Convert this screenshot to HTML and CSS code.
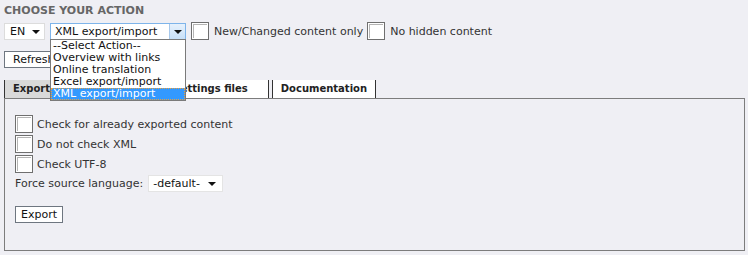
FILE: index.html
```html
<!DOCTYPE html>
<html>
<head>
<meta charset="utf-8">
<link rel="stylesheet" href="styles.css">
</head>
<body>
<div class="page">
  <h1 class="title">Choose your action</h1>
  <div class="actions">
    <div class="select lang">
      <span class="select-value">EN</span>
      <span class="arrow"></span>
    </div>
    <div class="select action focused">
      <span class="select-value">XML export/import</span>
      <span class="arrow-btn"><span class="arrow"></span></span>
      <ul class="options">
        <li>--Select Action--</li>
        <li>Overview with links</li>
        <li>Online translation</li>
        <li>Excel export/import</li>
        <li class="selected">XML export/import</li>
      </ul>
    </div>
    <span class="check"></span>
    <span class="label">New/Changed content only</span>
    <span class="check"></span>
    <span class="label">No hidden content</span>
  </div>
  <div class="refresh-row">
    <button class="btn refresh">Refresh</button>
  </div>
  <div class="tabs">
    <div class="tab active">Export/Import</div>
    <div class="tab wide">Download settings files</div>
    <div class="tab">Documentation</div>
  </div>
  <div class="panel">
    <div class="opt"><span class="check"></span><span class="label">Check for already exported content</span></div>
    <div class="opt"><span class="check"></span><span class="label">Do not check XML</span></div>
    <div class="opt"><span class="check"></span><span class="label">Check UTF-8</span></div>
    <div class="force">
      <span class="label">Force source language:</span>
      <div class="select src">
        <span class="select-value">-default-</span>
        <span class="arrow"></span>
      </div>
    </div>
    <button class="btn export">Export</button>
  </div>
</div>
</body>
</html>
```

FILE: styles.css
```css
html, body {
  margin: 0;
  padding: 0;
  background: #efeff4;
}
body {
  font-family: "DejaVu Sans", Verdana, sans-serif;
  font-size: 11px;
  color: #333;
}
.page {
  padding: 4px 4px 0 4px;
}
.title {
  margin: 0;
  font-size: 11px;
  line-height: 13px;
  font-weight: bold;
  text-transform: uppercase;
  color: #666;
}
.actions {
  display: flex;
  align-items: center;
  height: 18px;
  margin-top: 5px;
}
.select {
  position: relative;
  display: flex;
  align-items: center;
  height: 17px;
  box-sizing: border-box;
  background: #fff;
  border: 1px solid #dcdcdc;
  color: #111;
}
.select-value {
  flex: 1;
  padding-left: 4px;
  white-space: nowrap;
}
.arrow {
  width: 0;
  height: 0;
  border-left: 4px solid transparent;
  border-right: 4px solid transparent;
  border-top: 4px solid #111;
  margin-right: 4px;
  margin-top: 1px;
}
.lang {
  width: 41px;
}
.lang .select-value {
  padding-left: 5px;
}
.action {
  width: 136px;
  margin-left: 5px;
}
.action.focused {
  border-color: #7eb4ea;
}
.arrow-btn {
  align-self: stretch;
  width: 15px;
  display: flex;
  align-items: center;
  justify-content: center;
  background: linear-gradient(#e6f1fc, #c8e0f8);
  border-left: 1px solid #a6c8ec;
}
.arrow-btn .arrow {
  margin: 1px 0 0 0;
}
.options {
  position: absolute;
  top: 15px;
  left: -1px;
  width: 136px;
  box-sizing: border-box;
  margin: 0;
  padding: 0;
  list-style: none;
  background: #fff;
  border: 1px solid #7a7a7a;
  z-index: 5;
}
.options li {
  height: 12px;
  line-height: 12px;
  padding-left: 2px;
  white-space: nowrap;
  color: #111;
}
.options li.selected {
  background: #3399ff;
  color: #fff;
  outline: 1px dotted #e8a040;
  outline-offset: -1px;
}
.check {
  display: inline-block;
  width: 18px;
  height: 18px;
  box-sizing: border-box;
  background: #fff;
  border: 1px solid #6f6f6f;
  box-shadow: inset 0 0 0 1px #fff, inset 2px 2px 0 #b4b4b4;
  flex: none;
}
.actions .check {
  margin-left: 5px;
}
.actions .label {
  margin-left: 5px;
}
.actions .label + .check {
  margin-left: 4px;
}
.refresh-row {
  margin-top: 11px;
}
.btn {
  font-family: "DejaVu Sans", Verdana, sans-serif;
  font-size: 11px;
  color: #111;
  background: #fff;
  border: 1px solid #6e7680;
  padding: 0 6px;
  height: 17px;
  line-height: 15px;
  margin: 0;
}
.refresh {
  padding: 0 8px;
}
.tabs {
  display: flex;
  gap: 3px;
  margin-top: 12px;
  height: 18px;
}
.tab {
  padding: 0 8px;
  line-height: 18px;
  font-size: 10px;
  font-weight: bold;
  color: #222;
  background: #fff;
  border-left: 1px solid #333;
  border-right: 1px solid #333;
  white-space: nowrap;
}
.tab.active {
  background: #d9d9d9;
  padding-right: 11px;
}
.tab.wide {
  padding-right: 20px;
}
.panel {
  width: 741px;
  height: 153px;
  box-sizing: border-box;
  border: 1px solid #7c7c7c;
  padding: 16px 10px 0 10px;
}
.opt {
  display: flex;
  align-items: center;
  height: 18px;
  margin-bottom: 2px;
}
.opt .label {
  margin-left: 4px;
}
.force {
  display: flex;
  align-items: center;
  height: 17px;
  margin-top: 1px;
}
.src {
  width: 75px;
  margin-left: 5px;
  border-color: #e4e4e4;
}
.src .select-value {
  padding-left: 4px;
}
.src .arrow {
  margin-right: 6px;
}
.export {
  margin-top: 14px;
  height: 17px;
  padding: 0 5px;
}
```
